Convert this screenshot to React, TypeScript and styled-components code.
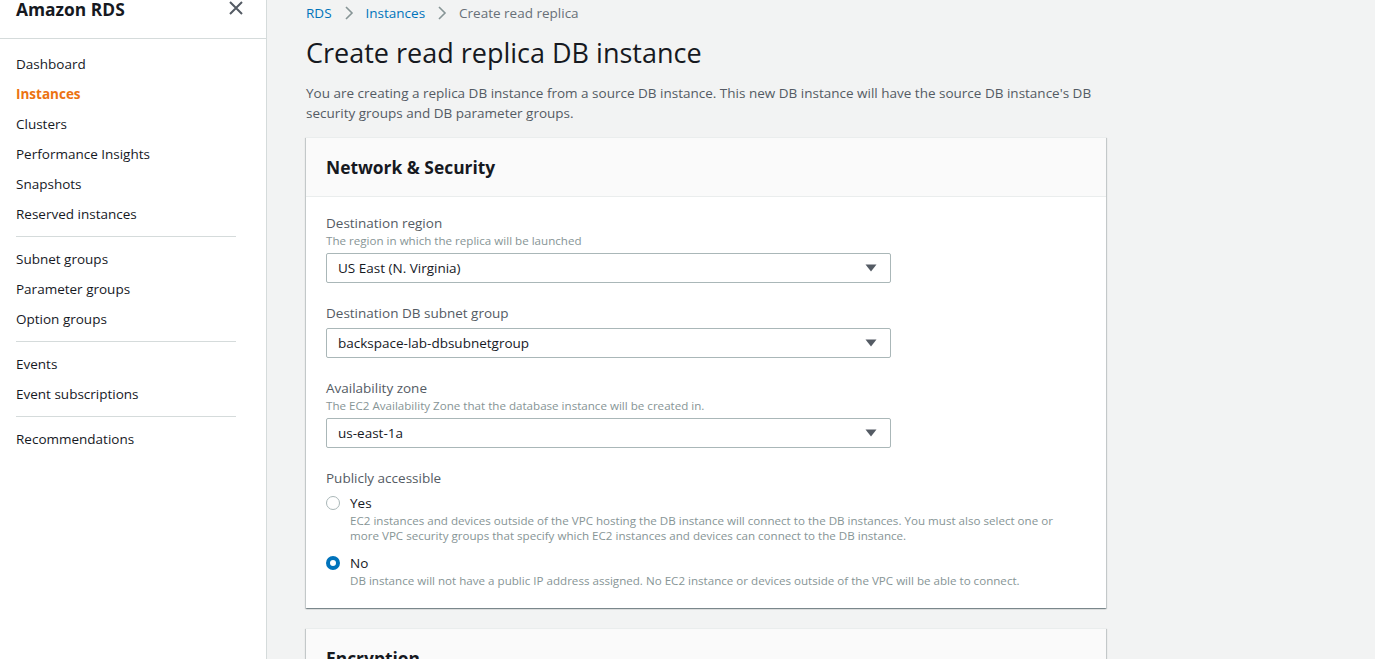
import React from "react";
import styled, { createGlobalStyle } from "styled-components";

const Global = createGlobalStyle`
  html, body { margin: 0; padding: 0; }
  body {
    font-family: "Open Sans", "Noto Sans", Arial, sans-serif;
    background: #f2f3f3;
    color: #16191f;
    overflow: hidden;
  }
  * { box-sizing: border-box; }
`;

const Page = styled.div`
  display: flex;
  height: 659px;
  overflow: hidden;
`;

const Sidebar = styled.nav`
  width: 267px;
  flex-shrink: 0;
  background: #ffffff;
  border-right: 1px solid #d5dbdb;
  height: 100%;
`;

const SideHeader = styled.div`
  display: flex;
  align-items: center;
  justify-content: space-between;
  height: 39px;
  padding: 0 22px 20px 16px;
  border-bottom: 1px solid #d5dbdb;
`;

const Brand = styled.div`
  font-size: 17.4px;
  font-weight: 700;
  line-height: 20px;
  color: #16191f;
  margin-top: -1px;
`;

const CloseBtn = styled.div`
  width: 16px;
  height: 16px;
  display: flex;
  margin-top: -2px;
`;

const NavList = styled.div`
  display: flex;
  flex-direction: column;
  padding: 10px 0 0 16px;
`;

const NavItem = styled.div<{ $active?: boolean }>`
  font-size: 13.5px;
  line-height: 20px;
  padding: 5px 0;
  color: ${(p) => (p.$active ? "#ec7211" : "#16191f")};
  font-weight: ${(p) => (p.$active ? 700 : 400)};
`;

const NavDivider = styled.hr`
  border: none;
  border-top: 1px solid #d5dbdb;
  width: 220px;
  margin: 7px 0 7px 0;
`;

const Main = styled.main`
  flex: 1;
  padding: 3px 0 0 39px;
`;

const Crumbs = styled.div`
  display: flex;
  align-items: center;
  gap: 12px;
  font-size: 13.5px;
  line-height: 20px;
`;

const Crumb = styled.span<{ $current?: boolean }>`
  color: ${(p) => (p.$current ? "#687078" : "#0073bb")};
`;

const Title = styled.h1`
  margin: 12px 0 0 0;
  font-size: 27px;
  font-weight: 400;
  line-height: 36px;
  color: #16191f;
`;

const Lead = styled.p`
  margin: 12px 0 0 0;
  width: 800px;
  font-size: 13.5px;
  line-height: 20px;
  color: #545b64;
`;

const Card = styled.section`
  width: 800px;
  background: #ffffff;
  margin-top: 14px;
  box-shadow: 0 1px 1px 0 rgba(0, 28, 36, 0.3), 1px 1px 1px 0 rgba(0, 28, 36, 0.15),
    -1px 1px 1px 0 rgba(0, 28, 36, 0.15);
  border-top: 1px solid #eaeded;

  & + & {
    margin-top: 20px;
  }
`;

const CardHeader = styled.div`
  background: #fafafa;
  border-bottom: 1px solid #eaeded;
  height: 59px;
  padding: 0 20px;
  display: flex;
  align-items: center;
`;

const CardTitle = styled.h2`
  margin: 0;
  font-size: 17.4px;
  font-weight: 700;
  line-height: 22px;
  color: #16191f;
`;

const CardBody = styled.div`
  padding: 16px 20px 15px 20px;
  display: flex;
  flex-direction: column;
  gap: 20px;
`;

const Field = styled.div`
  display: flex;
  flex-direction: column;
`;

const Label = styled.div`
  font-size: 13.5px;
  line-height: 20px;
  color: #545b64;
`;

const Hint = styled.div`
  font-size: 11.6px;
  line-height: 16px;
  color: #879596;
`;

const Select = styled.div<{ $afterHint?: boolean }>`
  margin-top: ${(p) => (p.$afterHint ? "4px" : "5px")};
  width: 565px;
  height: 30px;
  border: 1px solid #aab7b8;
  border-radius: 2px;
  background: #fff;
  display: flex;
  align-items: center;
  justify-content: space-between;
  padding: 0 13px 0 11px;
  font-size: 13.5px;
  color: #16191f;
`;

const RadioRow = styled.div`
  display: grid;
  grid-template-columns: 24px 1fr;
  margin-top: 5px;
`;

const RadioCircle = styled.span<{ $checked?: boolean }>`
  width: 14px;
  height: 14px;
  border-radius: 50%;
  margin-top: 3px;
  border: ${(p) => (p.$checked ? "4px solid #0073bb" : "1px solid #aab7b8")};
  background: #fff;
`;

const RadioText = styled.div`
  display: flex;
  flex-direction: column;
`;

const RadioLabel = styled.div`
  font-size: 13.5px;
  line-height: 20px;
  color: #16191f;
`;

const RadioDesc = styled.div`
  font-size: 11.6px;
  line-height: 15px;
  color: #879596;
  margin-bottom: 5px;
  width: 730px;
`;

const Triangle = () => (
  <svg width="12" height="8" viewBox="0 0 12 8">
    <path d="M0.5 0.5 L11.5 0.5 L6 7.5 Z" fill="#545b64" />
  </svg>
);

const Chevron = () => (
  <svg width="10" height="14" viewBox="0 0 10 14">
    <path d="M2 1 L8 7 L2 13" fill="none" stroke="#879596" strokeWidth="1.6" />
  </svg>
);

const SelectBox = ({ value, afterHint }: { value: string; afterHint?: boolean }) => (
  <Select $afterHint={afterHint}>
    <span>{value}</span>
    <Triangle />
  </Select>
);

export default function App() {
  return (
    <>
      <Global />
      <Page>
        <Sidebar>
          <SideHeader>
            <Brand>Amazon RDS</Brand>
            <CloseBtn>
              <svg width="16" height="16" viewBox="0 0 16 16">
                <path d="M2 2 L14 14 M14 2 L2 14" stroke="#545b64" strokeWidth="2" />
              </svg>
            </CloseBtn>
          </SideHeader>
          <NavList>
            <NavItem>Dashboard</NavItem>
            <NavItem $active>Instances</NavItem>
            <NavItem>Clusters</NavItem>
            <NavItem>Performance Insights</NavItem>
            <NavItem>Snapshots</NavItem>
            <NavItem>Reserved instances</NavItem>
            <NavDivider />
            <NavItem>Subnet groups</NavItem>
            <NavItem>Parameter groups</NavItem>
            <NavItem>Option groups</NavItem>
            <NavDivider />
            <NavItem>Events</NavItem>
            <NavItem>Event subscriptions</NavItem>
            <NavDivider />
            <NavItem>Recommendations</NavItem>
          </NavList>
        </Sidebar>
        <Main>
          <Crumbs>
            <Crumb>RDS</Crumb>
            <Chevron />
            <Crumb>Instances</Crumb>
            <Chevron />
            <Crumb $current>Create read replica</Crumb>
          </Crumbs>
          <Title>Create read replica DB instance</Title>
          <Lead>
            You are creating a replica DB instance from a source DB instance. This new DB instance will
            have the source DB instance's DB security groups and DB parameter groups.
          </Lead>
          <Card>
            <CardHeader>
              <CardTitle>Network &amp; Security</CardTitle>
            </CardHeader>
            <CardBody>
              <Field>
                <Label>Destination region</Label>
                <Hint>The region in which the replica will be launched</Hint>
                <SelectBox value="US East (N. Virginia)" afterHint />
              </Field>
              <Field>
                <Label>Destination DB subnet group</Label>
                <SelectBox value="backspace-lab-dbsubnetgroup" />
              </Field>
              <Field>
                <Label>Availability zone</Label>
                <Hint>The EC2 Availability Zone that the database instance will be created in.</Hint>
                <SelectBox value="us-east-1a" afterHint />
              </Field>
              <Field>
                <Label>Publicly accessible</Label>
                <RadioRow>
                  <RadioCircle />
                  <RadioText>
                    <RadioLabel>Yes</RadioLabel>
                    <RadioDesc>
                      EC2 instances and devices outside of the VPC hosting the DB instance will connect to
                      the DB instances. You must also select one or more VPC security groups that specify
                      which EC2 instances and devices can connect to the DB instance.
                    </RadioDesc>
                  </RadioText>
                </RadioRow>
                <RadioRow>
                  <RadioCircle $checked />
                  <RadioText>
                    <RadioLabel>No</RadioLabel>
                    <RadioDesc>
                      DB instance will not have a public IP address assigned. No EC2 instance or devices
                      outside of the VPC will be able to connect.
                    </RadioDesc>
                  </RadioText>
                </RadioRow>
              </Field>
            </CardBody>
          </Card>
          <Card>
            <CardHeader>
              <CardTitle>Encryption</CardTitle>
            </CardHeader>
          </Card>
        </Main>
      </Page>
    </>
  );
}
